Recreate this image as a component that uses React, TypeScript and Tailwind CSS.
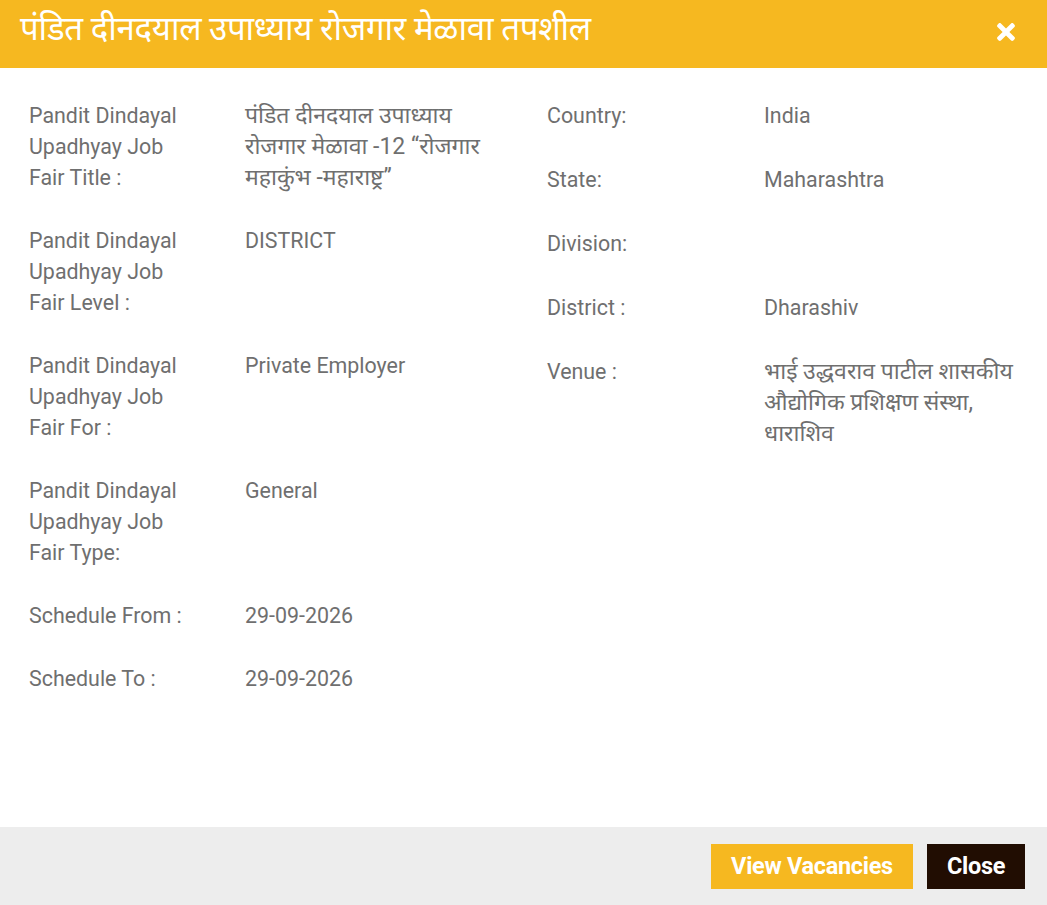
import { FaTimes } from "react-icons/fa"

interface Field {
  label: string
  value: string
  deva?: boolean
}

const leftFields: Field[] = [
  {
    label: "Pandit Dindayal Upadhyay Job Fair Title :",
    value: "पंडित दीनदयाल उपाध्याय रोजगार मेळावा -12 “रोजगार महाकुंभ -महाराष्ट्र”",
    deva: true,
  },
  { label: "Pandit Dindayal Upadhyay Job Fair Level :", value: "DISTRICT" },
  { label: "Pandit Dindayal Upadhyay Job Fair For :", value: "Private Employer" },
  { label: "Pandit Dindayal Upadhyay Job Fair Type:", value: "General" },
  { label: "Schedule From :", value: "29-09-2026" },
  { label: "Schedule To :", value: "29-09-2026" },
]

const rightFields: Field[] = [
  { label: "Country:", value: "India" },
  { label: "State:", value: "Maharashtra" },
  { label: "Division:", value: "" },
  { label: "District :", value: "Dharashiv" },
  { label: "Venue :", value: "भाई उद्धवराव पाटील शासकीय औद्योगिक प्रशिक्षण संस्था, धाराशिव", deva: true },
]

function FieldRow({ field, labelWidth, valueWidth, gap }: { field: Field; labelWidth: string; valueWidth: string; gap: string }) {
  return (
    <div className={`flex ${gap}`}>
      <div className={`${labelWidth} shrink-0 pr-[52px]`}>{field.label}</div>
      <div className={`${valueWidth} ${field.deva ? "text-[23px]" : ""}`}>{field.value || "\u00a0"}</div>
    </div>
  )
}

export default function App() {
  return (
    <div
      className="w-[1047px] h-[905px] bg-white flex flex-col overflow-hidden text-[#6f6f6f]"
      style={{ fontFamily: "Roboto, 'Noto Sans', 'Liberation Sans', sans-serif" }}
    >
      {/* Header */}
      <div className="h-[68px] shrink-0 bg-[#f6b820] flex items-center justify-between pl-[20px] pr-[30px]">
        <h1 className="text-white text-[33px] leading-none tracking-[-0.3px] pb-[12px]">
          पंडित दीनदयाल उपाध्याय रोजगार मेळावा तपशील
        </h1>
        <FaTimes className="text-white w-[22px] h-[26px] mb-[4px]" />
      </div>

      {/* Body */}
      <div className="flex-1 flex px-[29px] pt-[32px] text-[21.4px] leading-[31px]">
        <div className="w-[518px] shrink-0">
          {leftFields.map((f) => (
            <FieldRow key={f.label} field={f} labelWidth="w-[216px]" valueWidth="w-[250px]" gap="mb-[32px]" />
          ))}
        </div>
        <div className="flex-1">
          {rightFields.map((f) => (
            <FieldRow key={f.label} field={f} labelWidth="w-[217px]" valueWidth="w-[258px]" gap="mb-[33px]" />
          ))}
        </div>
      </div>

      {/* Footer */}
      <div className="h-[78px] shrink-0 bg-[#ededed] flex justify-end items-start pt-[17px] pr-[22px] gap-[14px]">
        <button className="h-[45px] w-[202px] bg-[#f6b820] text-white font-bold text-[23.5px] tracking-[-0.3px]">
          View Vacancies
        </button>
        <button className="h-[45px] w-[98px] bg-[#210d02] text-white font-bold text-[23.5px] tracking-[-0.3px]">
          Close
        </button>
      </div>
    </div>
  )
}
